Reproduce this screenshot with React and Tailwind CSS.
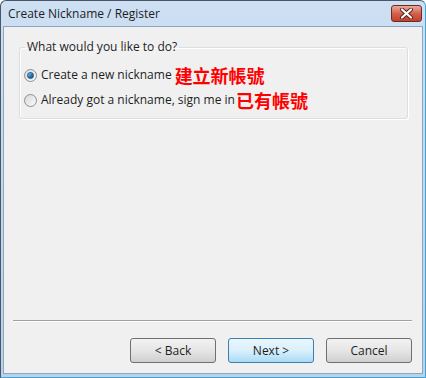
import React from "react";

const ui = { fontFamily: '"Open Sans", "Noto Sans", Arial, sans-serif' };
const cjk = { fontFamily: '"Noto Sans CJK TC", "Noto Sans CJK SC", sans-serif' };

function Radio({ checked }) {
  return (
    <span className="relative flex h-[13px] w-[13px] shrink-0 items-center justify-center rounded-full border border-[#8f8f8f] bg-gradient-to-br from-[#d8d8d8] to-[#fbfbfb]">
      {checked && (
        <span className="h-[7px] w-[7px] rounded-full border border-[#1b4f7d] bg-gradient-to-br from-[#9ad0f3] via-[#2a80c0] to-[#0e4f8c]" />
      )}
    </span>
  );
}

function Button({ label, primary }) {
  return (
    <button
      className={
        primary
          ? "h-[25px] w-[86px] rounded-[3px] border border-[#3c7fb1] bg-gradient-to-b from-[#eaf6fd] via-[#d9f0fc] to-[#a9dbf6] text-[12px] text-[#1e1e1e]"
          : "h-[25px] w-[86px] rounded-[3px] border border-[#707070] bg-gradient-to-b from-[#f2f2f2] via-[#e6e6e6] to-[#cfcfcf] text-[12px] text-[#1e1e1e]"
      }
      style={ui}
    >
      {label}
    </button>
  );
}

function CloseButton() {
  return (
    <div className="flex h-[17px] w-[31px] items-center justify-center rounded-[3px] border border-[#6f2a22] bg-gradient-to-b from-[#e9a99c] via-[#d2614d] to-[#c1402a]">
      <svg width="13" height="11" viewBox="0 0 13 11">
        <path
          d="M2 1.5 L11 9.5 M11 1.5 L2 9.5"
          stroke="#5a1f18"
          strokeWidth="4"
          strokeLinecap="round"
        />
        <path
          d="M2 1.5 L11 9.5 M11 1.5 L2 9.5"
          stroke="#ffffff"
          strokeWidth="2.2"
          strokeLinecap="round"
        />
      </svg>
    </div>
  );
}

export default function App() {
  return (
    <div
      className="flex h-[378px] w-[426px] flex-col overflow-hidden rounded-t-[6px] border border-[#4a5566] border-r-[#3aa9d9] border-b-[#3aa9d9] bg-gradient-to-b from-[#cddff3] to-[#b9d1ea]"
      style={ui}
    >
      <div className="flex h-[25px] shrink-0 items-center justify-between pl-[7px] pr-[3px]">
        <span className="text-[12px] text-[#1e1e1e]">Create Nickname / Register</span>
        <CloseButton />
      </div>
      <div className="mx-[2px] mb-[3px] flex flex-1 flex-col border border-[#8ea5c0] bg-[#f0f0f0] pb-[10px] pl-[9px] pr-[10px] pt-[11px]">
        <fieldset className="ml-[6px] mr-[4px] rounded-[3px] border border-[#d5dfe5] px-[4px] pb-[8px] shadow-[inset_1px_1px_0_#ffffff,1px_1px_0_#ffffff]">
          <legend className="ml-[1px] px-[2px] text-[12px] text-[#1e1e1e]">What would you like to do?</legend>
          <div className="mt-[9px] flex flex-col gap-[5px]">
            <label className="flex h-[20px] items-center gap-[4px] text-[12px] text-[#1e1e1e]">
              <Radio checked />
              <span className="flex items-center">
                Create a new nickname
                <span className="ml-[3px] text-[18px] font-bold leading-none text-[#ff0000]" style={cjk}>建立新帳號</span>
              </span>
            </label>
            <label className="flex h-[20px] items-center gap-[4px] text-[12px] text-[#1e1e1e]">
              <Radio />
              <span className="flex items-center">
                Already got a nickname, sign me in
                <span className="ml-[1px] text-[18px] font-bold leading-none text-[#ff0000]" style={cjk}>已有帳號</span>
              </span>
            </label>
          </div>
        </fieldset>
        <div className="flex-1" />
        <div className="border-t border-[#a0a0a0] shadow-[0_1px_0_#ffffff]" />
        <div className="mt-[17px] flex justify-end gap-[12px]">
          <Button label="< Back" />
          <Button label="Next >" primary />
          <Button label="Cancel" />
        </div>
      </div>
    </div>
  );
}
